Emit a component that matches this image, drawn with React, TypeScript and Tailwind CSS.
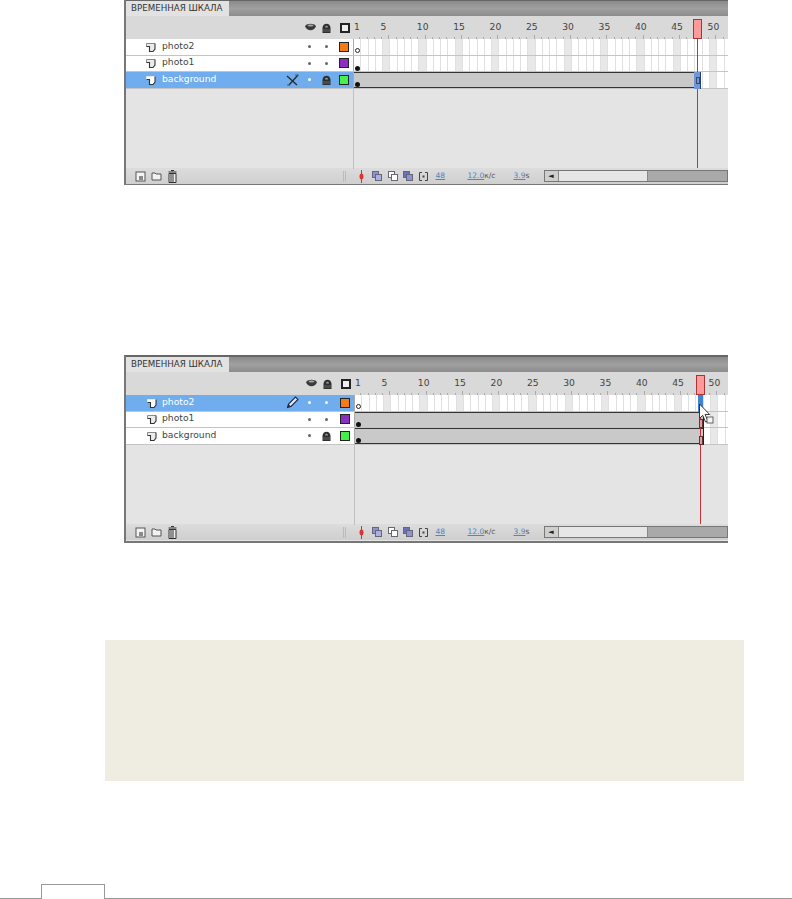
import React from 'react'

type Layer = {
    name: string
    color: string
    locked?: boolean
    selected?: boolean
    tool?: 'pen' | 'cross'
    tween: boolean
    empty?: boolean
}

const NUMBERS = [5, 10, 15, 20, 25, 30, 35, 40, 45, 50]
const frames = Array.from({ length: 52 }, (_, i) => i + 1)

// small drawings used in the panel
const LayerIcon = ({ selected }: { selected?: boolean }) => (
    <svg width="10" height="10" viewBox="0 0 10 10" className="shrink-0">
        <path d="M0.5 1.5H9V7L7 9.5H3.5V4.5H0.5z" fill={selected ? '#fff' : '#ececec'} />
        <path d="M0.5 4.5V1.5H9" fill="none" stroke={selected ? '#dfe9f7' : '#8a8a8a'} strokeWidth="1" />
        <path d="M9 1.5V7L7 9.5H3.5V4.5H0.5" fill="none" stroke="#333" strokeWidth="1.1" />
    </svg>
)

const Eye = () => (
    <svg width="11" height="9" viewBox="0 0 11 9">
        <path d="M0 3.2C2 0 9 0 11 3.2 9 8.5 2 8.5 0 3.2z" fill="#3a3a3a" />
        <ellipse cx="5.5" cy="2.4" rx="3" ry="1" fill="#a8a8a8" />
    </svg>
)

const Lock = ({ size = 9 }: { size?: number }) => (
    <svg width={size} height={size + 1} viewBox="0 0 9 10">
        <path d="M0.5 10V5C0.5 -0.8 8.5 -0.8 8.5 5V10z" fill="#2e2e2e" />
        <path d="M3 4.5C3 2.2 6 2.2 6 4.5z" fill="#9a9a9a" />
        <rect x="1" y="6" width="7" height="3" fill="#4a4a4a" />
    </svg>
)

const Pen = () => (
    <svg width="13" height="13" viewBox="0 0 13 13">
        <path d="M1.5 11.5 2.5 8 9.5 1 12 3.5 5 10.5z" fill="#dfe6f2" stroke="#1f2a44" strokeWidth="1.1" />
        <path d="M1.5 11.5 2.5 8 5 10.5z" fill="#1f2a44" />
    </svg>
)

const CrossedPen = () => (
    <svg width="13" height="12" viewBox="0 0 13 12">
        <path d="M1 2 11 11M12 1 3 11" stroke="#2a2a2a" strokeWidth="1.3" />
        <path d="M9 1h3.5M1 11h3" stroke="#555" strokeWidth="1" />
    </svg>
)

const NewLayer = () => (
    <svg width="11" height="11" viewBox="0 0 11 11">
        <rect x="1" y="1" width="9" height="9" fill="#f4f4f4" stroke="#555" />
        <rect x="4" y="5" width="4" height="4" fill="#8a8a8a" />
    </svg>
)

const Folder = () => (
    <svg width="11" height="9" viewBox="0 0 11 9">
        <path d="M1 1h3l1 1h5v6H1z" fill="#f2f2f2" stroke="#555" />
    </svg>
)

const Trash = () => (
    <svg width="9" height="13" viewBox="0 0 9 13">
        <path d="M0.5 2h8M3 0.5h3" stroke="#333" strokeWidth="1.2" />
        <path d="M1 3.5h7V12.5H1z" fill="#eee" stroke="#333" />
        <path d="M3 4v8M5 4v8" stroke="#333" strokeWidth="1" />
    </svg>
)

const Onion = ({ back, front }: { back: string; front: string }) => (
    <svg width="10" height="10" viewBox="0 0 10 10">
        <rect x="0.5" y="0.5" width="6" height="6" fill={back} stroke="#667" />
        <rect x="3.5" y="3.5" width="6" height="6" fill={front} stroke="#667" />
    </svg>
)

const Cursor = () => (
    <svg width="16" height="22" viewBox="0 0 16 22" className="absolute top-[8px] left-[-1px]">
        <path d="M1.5 1v14.5l3.2-3.2 2.8 6.7 2.4-1-2.8-6.5h4.6z" fill="#fff" stroke="#222" strokeWidth="0.9" />
        <rect x="9" y="14" width="6" height="6" fill="#f4f4f4" stroke="#444" strokeWidth="0.8" />
    </svg>
)

const FrameCells = () => (
    <div className="flex h-full bg-white">
        {frames.map((f) => (
            <div
                key={f}
                className={`h-full w-[7.28px] shrink-0 border-r border-[#e0e0e0] ${f % 5 === 0 ? 'bg-[#e8e8e8]' : ''}`}
            />
        ))}
    </div>
)

const LayerRow = ({ layer, endX, second }: { layer: Layer; endX: number; second: boolean }) => {
    const { selected } = layer
    const dot = `h-[3px] w-[3px] rounded-full ${selected ? 'bg-white' : 'bg-[#666]'}`
    return (
        <div className="flex h-[16.5px] border-b border-[#c4c4c4]">
            <div className={`flex ${second ? 'w-[228px] pl-[21px]' : 'w-[227px] pl-[20px]'} shrink-0 items-center ${selected ? 'bg-[#6fadee] text-white' : 'bg-white text-[#444]'}`}>
                <LayerIcon selected={selected} />
                <span className={`${second ? 'ml-[5px]' : 'ml-[6px]'} w-[122px] pb-[2px] text-[9.2px]`}>{layer.name}</span>
                <div className="flex w-[16px] justify-center">
                    {layer.tool === 'pen' && <Pen />}
                    {layer.tool === 'cross' && <CrossedPen />}
                </div>
                <div className="flex w-[18px] justify-center">
                    <span className={dot} />
                </div>
                <div className="flex w-[16px] justify-center">
                    {layer.locked ? <Lock /> : <span className={dot} />}
                </div>
                <div className={`${second ? 'ml-[6px]' : 'ml-[5px]'} h-[10px] w-[10px] border border-[#222]`} style={{ backgroundColor: layer.color }} />
            </div>
            <div className="relative flex-1 overflow-hidden border-l border-[#aaa]">
                <FrameCells />
                {layer.tween && (
                    <div
                        className="absolute top-0 left-0 h-[16px] border-y border-[#333] bg-[#c9c9c9]"
                        style={{ width: endX }}
                    />
                )}
                {layer.empty ? (
                    <span className="absolute top-[9px] left-[1px] h-[5px] w-[5px] rounded-full border border-[#222] bg-white" />
                ) : (
                    <span className="absolute top-[10px] left-[1px] h-[5px] w-[5px] rounded-full bg-[#111]" />
                )}
            </div>
        </div>
    )
}

const Timeline = ({ layers, second }: { layers: Layer[]; second: boolean }) => {
    const playhead = second ? 347 : 344
    return (
        <div className={`w-[604px] border-l-2 border-b-2 border-[#777] bg-[#e4e4e4] font-['DejaVu_Sans',sans-serif] ${second ? 'h-[188px] border-t border-t-[#666]' : 'h-[185px]'}`}>
            {/* tab strip */}
            <div className="flex h-[16px] border-t border-[#666] bg-gradient-to-b from-[#8a8a8a] via-[#a0a0a0] to-[#8c8c8c]">
                <div className="flex w-[103px] items-center bg-[#e2e2e2] pl-[5px] text-[8.7px] whitespace-nowrap text-[#333]">
                    ВРЕМЕННАЯ ШКАЛА
                </div>
            </div>

            {/* ruler */}
            <div className="flex h-[23px] bg-[#d9d9d9]">
                <div className={`flex ${second ? 'w-[228px]' : 'w-[227px]'} shrink-0 items-center justify-end pr-[3px]`}>
                    <Eye />
                    <span className="ml-[6px]"><Lock /></span>
                    <div className="ml-[9px] h-[10px] w-[10px] border-2 border-[#222] bg-[#eee]" />
                </div>
                <div className="relative flex-1 overflow-hidden text-[9.2px] text-[#444]">
                    <div className="flex pt-[4px]">
                        <span className="w-[27.5px] shrink-0 pl-[1px]">1</span>
                        {NUMBERS.map((n) => (
                            <span key={n} className="w-[36.35px] shrink-0">{n}</span>
                        ))}
                    </div>
                    <div className="absolute bottom-0 left-0 flex">
                        {frames.map((f) => (
                            <span key={f} className={`w-[7.28px] shrink-0 self-end border-r border-[#aaa] ${f % 5 === 0 ? 'h-[4px]' : 'h-[2px]'}`} />
                        ))}
                    </div>
                </div>
            </div>

            {/* layers + frames, playhead lies over them */}
            <div className="relative h-[129px]">
                {layers.map((l) => (
                    <LayerRow key={l.name} layer={l} endX={second ? 348 : 340} second={second} />
                ))}
                <div className={`${second ? 'ml-[228px]' : 'ml-[227px]'} h-[80px] border-l border-[#c0c0c0]`} />

                {/* playhead */}
                <div className="absolute top-[-20px] h-[20px] w-[9px] border border-[#a33] bg-[#ff9a9a]" style={{ left: playhead + 223 }} />
                <div className="absolute top-0 bottom-0 w-px bg-[#c8323c]" style={{ left: playhead + 227 }} />

                {second ? (
                    <>
                        <div className="absolute top-0 left-[572px] h-[17px] w-[5px] bg-[#3f82d6]" />
                        <div className="absolute top-[24px] left-[573px] h-[9px] w-[4px] border border-[#633] bg-[#d9a0a0]" />
                        <div className="absolute top-[41px] left-[573px] h-[9px] w-[4px] border border-[#633] bg-[#d9a0a0]" />
                        <div className="absolute top-[17px] left-[577px] h-[33px] w-px bg-[#222]" />
                        <div className="absolute top-0 left-[573px]">
                            <Cursor />
                        </div>
                    </>
                ) : (
                    <>
                        <div className="absolute top-[33px] left-[568px] h-[17px] w-[7px] bg-[#6f97d8]" />
                        <div className="absolute top-[38px] left-[570px] h-[7px] w-[4px] border border-[#446]" />
                        <div className="absolute top-[33px] left-[574px] h-[17px] w-px bg-[#246]" />
                    </>
                )}
            </div>

            {/* footer */}
            <div className="flex h-[16px] items-center bg-gradient-to-b from-[#dcdcdc] to-[#cfcfcf] text-[7.5px] text-[#555]">
                <div className="ml-[9px] flex w-[208px] items-center">
                    <NewLayer />
                    <span className="ml-[5px]"><Folder /></span>
                    <span className="ml-[6px]"><Trash /></span>
                </div>
                <div className="h-[11px] w-[3px] border-x border-[#bbb]" />
                <div className="ml-[13px] flex items-center gap-[5.5px]">
                    <svg width="5" height="13" viewBox="0 0 5 13">
                        <path d="M2.5 0v13" stroke="#c33" />
                        <ellipse cx="2.5" cy="6.5" rx="2" ry="3" fill="#d33" />
                    </svg>
                    <span className="ml-[2.5px]"><Onion back="#8d93cf" front="#aab0e0" /></span>
                    <Onion back="#fff" front="#fff" />
                    <Onion back="#6a70c0" front="#8d93cf" />
                    <svg width="9" height="9" viewBox="0 0 9 9">
                        <path d="M3 .5H.5v8H3M6 .5h2.5v8H6" fill="none" stroke="#444" />
                        <rect x="3.5" y="3.5" width="2" height="2" fill="#444" />
                    </svg>
                </div>
                <span className="ml-[8px] w-[32px] text-[#4a86c8] underline">48</span>
                <span className="w-[46px] whitespace-nowrap"><span className="text-[#4a86c8] underline">12.0</span>к/с</span>
                <span className="w-[30px] whitespace-nowrap"><span className="text-[#4a86c8] underline">3.9</span>s</span>
                <div className="flex h-[12px] flex-1 border border-[#777] bg-[#a9a9a9]">
                    <div className="flex w-[13px] items-center justify-center bg-[#cfcfcf] text-[7px] text-[#222]">◄</div>
                    <div className="w-[90px] border-x border-[#888] bg-[#e6e6e6]" />
                </div>
            </div>
        </div>
    )
}

const FIRST: Layer[] = [
    { name: 'photo2', color: '#f47c17', tween: false, empty: true },
    { name: 'photo1', color: '#8a2fc0', tween: false },
    { name: 'background', color: '#44f04c', locked: true, selected: true, tool: 'cross', tween: true },
]

const SECOND: Layer[] = [
    { name: 'photo2', color: '#f47c17', selected: true, tool: 'pen', tween: false, empty: true },
    { name: 'photo1', color: '#8a2fc0', tween: true },
    { name: 'background', color: '#44f04c', locked: true, tween: true },
]

export default function App() {
    return (
        <div className="h-[899px] w-[792px] overflow-hidden bg-white">
            <div className="ml-[124px]">
                <Timeline layers={FIRST} second={false} />
                <div className="h-[170px]" />
                <Timeline layers={SECOND} second={true} />
            </div>
            <div className="mt-[97px] ml-[105px] h-[141px] w-[639px] bg-[#efece2]" />
            <div className="mt-[103px] flex h-[15px] items-end">
                <div className="h-px w-[41px] bg-[#999]" />
                <div className="h-[15px] w-[64px] border-x border-t border-[#999] bg-white" />
                <div className="h-px flex-1 bg-[#999]" />
            </div>
        </div>
    )
}
